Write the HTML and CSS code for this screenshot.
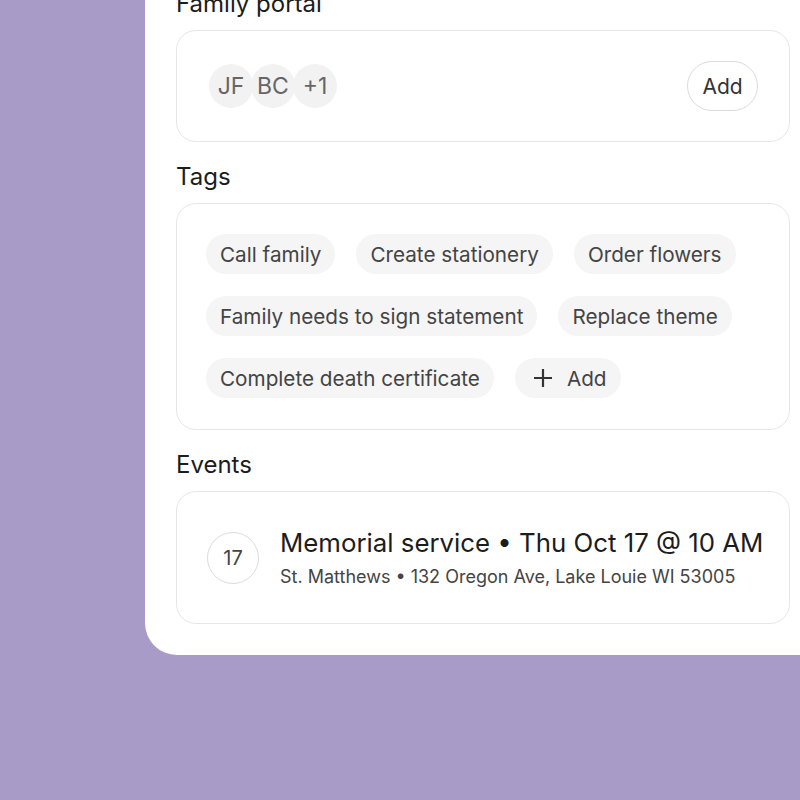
FILE: index.html
```html
<!DOCTYPE html>
<html>
<head>
<title>Case details</title>
<link rel="stylesheet" href="styles.css">
</head>
<body>
  <div id="panel">
    <h2 class="section-title">Family portal</h2>
    <div class="box portal">
      <div class="avatars">
        <span class="avatar">JF</span>
        <span class="avatar">BC</span>
        <span class="avatar">+1</span>
      </div>
      <button class="add-btn">Add</button>
    </div>

    <h2 class="section-title">Tags</h2>
    <div class="box tags">
      <span class="tag">Call family</span>
      <span class="tag">Create stationery</span>
      <span class="tag">Order flowers</span>
      <span class="tag">Family needs to sign statement</span>
      <span class="tag">Replace theme</span>
      <span class="tag">Complete death certificate</span>
      <span class="tag tag-add">
        <svg width="22" height="22" viewBox="0 0 22 22"><path d="M11 2v18M2 11h18" stroke="#333" stroke-width="2.2" fill="none"/></svg>
        Add
      </span>
    </div>

    <h2 class="section-title">Events</h2>
    <div class="box event">
      <div class="date">17</div>
      <div class="event-info">
        <div class="event-title">Memorial service &bull; Thu Oct 17 @ 10 AM</div>
        <div class="event-place">St. Matthews &bull; 132 Oregon Ave, Lake Louie WI 53005</div>
      </div>
    </div>
  </div>
</body>
</html>
```

FILE: styles.css
```css
html, body {
margin: 0;
overflow: hidden;
}

body {
background-color: #a99bc8;
font-family: Inter, "Noto Sans", sans-serif;
color: #1c1c1c;
height: 800px;
}

#panel {
background-color: white;
width: 614px;
margin-left: 145px;
margin-top: -11px;
padding: 0 31px 31px 31px;
border-radius: 0 0 0 32px;
}

.section-title {
font-size: 24px;
font-weight: 400;
line-height: 30px;
margin: 20px 0 11px 0;
}

#panel .section-title:first-child {
margin-top: 0;
}

.box {
border: 1px solid #e6e6e6;
border-radius: 20px;
box-sizing: border-box;
}

.portal {
display: flex;
align-items: center;
justify-content: space-between;
padding: 30px 31px 30px 32px;
}

.avatars {
display: flex;
}

.avatar {
width: 44px;
height: 44px;
border-radius: 50%;
background-color: #f2f2f2;
color: #666;
font-size: 23px;
display: flex;
align-items: center;
justify-content: center;
margin-right: -2px;
}

.add-btn {
font-family: inherit;
font-size: 21px;
color: #333;
background: white;
border: 1px solid #dcdcdc;
border-radius: 25px;
width: 71px;
height: 50px;
padding: 0;
}

.tags {
display: flex;
flex-wrap: wrap;
gap: 22px 21px;
padding: 30px 30px 31px 29px;
}

.tag {
display: flex;
align-items: center;
height: 40px;
padding: 0 14px;
border-radius: 20px;
background-color: #f5f5f5;
font-size: 20.7px;
color: #444;
}

.tag-add {
padding-left: 17px;
padding-right: 14px;
gap: 13px;
}

.event {
display: flex;
align-items: center;
height: 133px;
padding: 0 30px;
}

.date {
width: 52px;
height: 52px;
border: 1px solid #dcdcdc;
border-radius: 50%;
box-sizing: border-box;
display: flex;
align-items: center;
justify-content: center;
font-size: 20px;
color: #444;
margin-right: 21px;
flex-shrink: 0;
}

.event-title {
font-size: 25.8px;
line-height: 32px;
color: #1c1c1c;
white-space: nowrap;
}

.event-place {
font-size: 18px;
line-height: 24px;
margin-top: 6px;
color: #444;
white-space: nowrap;
}
```
